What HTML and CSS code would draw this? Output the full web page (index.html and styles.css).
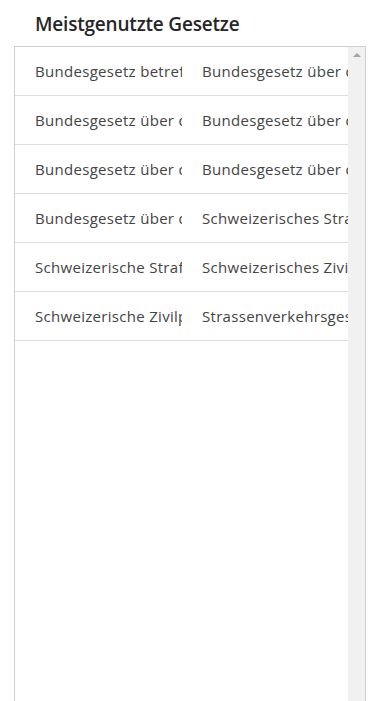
FILE: index.html
```html
<!DOCTYPE html>
<html lang="de">
  <head>
    <meta charset="UTF-8" />
    <meta name="viewport" content="width=device-width, initial-scale=1.0" />
    <title>Meistgenutzte Gesetze</title>
    <link rel="stylesheet" href="styles.css">
  </head>
  <body>
    <h2 class="title">Meistgenutzte Gesetze</h2>
    <div class="panel">
      <div class="list">
        <div class="row">
          <div class="cell">Bundesgesetz betreffend die Ergänzung des Schweizerischen Zivilgesetzbuches</div>
          <div class="cell">Bundesgesetz über die direkte Bundessteuer</div>
        </div>
        <div class="row">
          <div class="cell">Bundesgesetz über die Alters- und Hinterlassenenversicherung</div>
          <div class="cell">Bundesgesetz über die Arbeit in Industrie, Gewerbe und Handel</div>
        </div>
        <div class="row">
          <div class="cell">Bundesgesetz über das Internationale Privatrecht</div>
          <div class="cell">Bundesgesetz über die Mehrwertsteuer</div>
        </div>
        <div class="row">
          <div class="cell">Bundesgesetz über die Schuldbetreibung und Konkurs</div>
          <div class="cell">Schweizerisches Strafgesetzbuch</div>
        </div>
        <div class="row">
          <div class="cell">Schweizerische Strafprozessordnung</div>
          <div class="cell">Schweizerisches Zivilgesetzbuch</div>
        </div>
        <div class="row">
          <div class="cell">Schweizerische Zivilprozessordnung</div>
          <div class="cell">Strassenverkehrsgesetz</div>
        </div>
      </div>
      <div class="scrollbar">
        <span class="arrow-up"></span>
      </div>
    </div>
  </body>
</html>
```

FILE: styles.css
```css
/* CSS styles */
body {
  font-family: "Open Sans", Arial, sans-serif;
  margin: 0;
  padding: 0;
  height: 100vh;
  display: flex;
  flex-direction: column;
  background-color: #fff;
  overflow: hidden;
}

.title {
  margin: 0 0 10px;
  padding: 12px 0 0 35px;
  font-size: 19px;
  line-height: 24px;
  font-weight: 600;
  letter-spacing: -0.2px;
  color: #262626;
}

.panel {
  flex: 1;
  width: 350px;
  margin-left: 14px;
  display: flex;
  border: 1px solid #cfcfcf;
  border-bottom: none;
}

.list {
  flex: 1;
  overflow: hidden;
}

.row {
  display: grid;
  grid-template-columns: 167px 167px;
  border-bottom: 1px solid #dedede;
}

.cell {
  padding-left: 20px;
  padding-right: 1px;
  font-size: 15px;
  line-height: 48px;
  letter-spacing: 0.3px;
  color: #444;
  white-space: nowrap;
  overflow: hidden;
}

.scrollbar {
  width: 17px;
  background-color: #f1f1f1;
  display: flex;
  justify-content: center;
}

.arrow-up {
  margin-top: 6px;
  width: 0;
  height: 0;
  border-left: 4px solid transparent;
  border-right: 4px solid transparent;
  border-bottom: 4px solid #a3a3a3;
}
```
